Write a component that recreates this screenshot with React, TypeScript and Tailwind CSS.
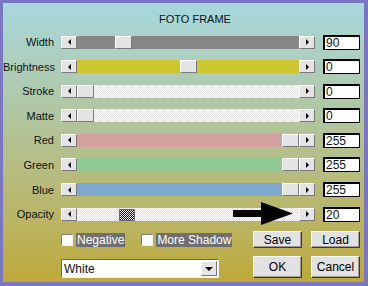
import React from "react";

interface Slider {
  label: string;
  track: string;
  thumb: number;
  value: string;
  dither?: boolean;
  checker?: boolean;
}

const sliders: Slider[] = [
  { label: "Width", track: "bg-[#878787]", thumb: 38, value: "90" },
  { label: "Brightness", track: "bg-[#cdc62e]", thumb: 103, value: "0" },
  { label: "Stroke", track: "", thumb: 0, value: "0", dither: true },
  { label: "Matte", track: "", thumb: 0, value: "0", dither: true },
  { label: "Red", track: "bg-[#d4a1a2]", thumb: 205, value: "255" },
  { label: "Green", track: "bg-[#90c991]", thumb: 205, value: "255" },
  { label: "Blue", track: "bg-[#7fa8cf]", thumb: 205, value: "255" },
  { label: "Opacity", track: "", thumb: 42, value: "20", dither: true, checker: true },
];

const raised =
  "bg-[#e4e4e4] border border-t-white border-l-white border-r-[#7a7a7a] border-b-[#7a7a7a]";

const ArrowBtn = ({ dir }: { dir: "left" | "right" }) => (
  <div className={`w-[16px] h-full flex items-center justify-center ${raised}`}>
    {dir === "left" ? (
      <div className="w-0 h-0 border-y-[3px] border-y-transparent border-r-[3px] border-r-black" />
    ) : (
      <div className="w-0 h-0 border-y-[3px] border-y-transparent border-l-[3px] border-l-black" />
    )}
  </div>
);

const Row = ({ s }: { s: Slider }) => (
  <div className="flex items-center h-[14px]">
    <div className="w-[51px] text-right leading-[14px]">{s.label}</div>
    <div className="ml-[7px] w-[254px] h-[13px] flex">
      <ArrowBtn dir="left" />
      <div
        className={`relative flex-1 h-full ${
          s.dither
            ? "bg-[conic-gradient(#ffffff_25%,#e2e2e2_0_50%,#ffffff_0_75%,#e2e2e2_0)] bg-[length:2px_2px]"
            : s.track
        }`}
      >
        {s.checker ? (
          <div
            className="absolute top-[1px] h-[12px] w-[16px] border border-[#6a6a6a] bg-[conic-gradient(#111_25%,#f0f0f0_0_50%,#111_0_75%,#f0f0f0_0)] bg-[length:2px_2px]"
            style={{ left: s.thumb }}
          />
        ) : (
          <div className={`absolute top-0 h-full w-[17px] ${raised}`} style={{ left: s.thumb }} />
        )}
      </div>
      <ArrowBtn dir="right" />
    </div>
    <div className="ml-[8px] w-[37px] h-[15px] bg-white border border-black border-l-2 border-t-2 pl-[1px] text-[12px] leading-[12px]">
      {s.value}
    </div>
  </div>
);

const Check = ({ label }: { label: string }) => (
  <div className="flex items-center">
    <div className="w-[12px] h-[12px] bg-white border border-t-[#808080] border-l-[#808080] border-r-[#f0f0f0] border-b-[#f0f0f0]" />
    <span className="ml-[3px] px-[1px] bg-[#6f6f6f] text-white text-[12px] leading-[14px]">{label}</span>
  </div>
);

const Btn = ({ children, h }: { children: React.ReactNode; h: string }) => (
  <button
    className={`w-[49px] ${h} bg-[#e2e2e2] border border-t-white border-l-white border-r-[#3a3a3a] border-b-[#3a3a3a] shadow-[inset_-1px_-1px_0_#9a9a9a] text-[12px] leading-none text-black`}
  >
    {children}
  </button>
);

export default function App() {
  return (
    <div className="relative w-[368px] h-[286px] overflow-hidden border-[3px] border-r-4 border-b-4 border-[#7b76c2] bg-linear-to-b from-[#a7d8de] via-[#b3c190] to-[#bea935] font-['Liberation_Sans',Arial,sans-serif] text-[11px] text-[#111]">
      <div className="pt-[9px] pl-[156px] h-[32px] leading-[14px]">FOTO FRAME</div>
      <div className="flex flex-col gap-[10.6px]">
        {sliders.map((s) => (
          <Row key={s.label} s={s} />
        ))}
      </div>

      <div className="flex mt-[10px] pl-[58px] pr-[4px]">
        <div className="flex flex-col">
          <div className="h-[17px] flex items-center gap-[16px]">
            <Check label="Negative" />
            <Check label="More Shadow" />
          </div>
          <div className="mt-[11px] w-[158px] h-[19px] flex items-center bg-white border border-t-[#6a6a6a] border-l-[#6a6a6a] border-r-[#f4f4f4] border-b-[#f4f4f4] pl-[2px] text-[12px]">
            <span className="flex-1">White</span>
            <div className={`w-[16px] h-[15px] mr-[1px] flex items-center justify-center ${raised}`}>
              <div className="w-0 h-0 border-x-[4px] border-x-transparent border-t-[4px] border-t-black" />
            </div>
          </div>
        </div>
        <div className="ml-auto grid grid-cols-2 gap-x-[9px] gap-y-[7px]">
          <Btn h="h-[17px]">Save</Btn>
          <Btn h="h-[17px]">Load</Btn>
          <Btn h="h-[22px]">OK</Btn>
          <Btn h="h-[22px]">Cancel</Btn>
        </div>
      </div>

      <svg className="absolute left-[230px] top-[199px]" width="62" height="24" viewBox="0 0 62 24">
        <rect x="0" y="8" width="32" height="7" fill="#000" />
        <polygon points="28,0 60,11.5 28,23" fill="#000" />
      </svg>
    </div>
  );
}
